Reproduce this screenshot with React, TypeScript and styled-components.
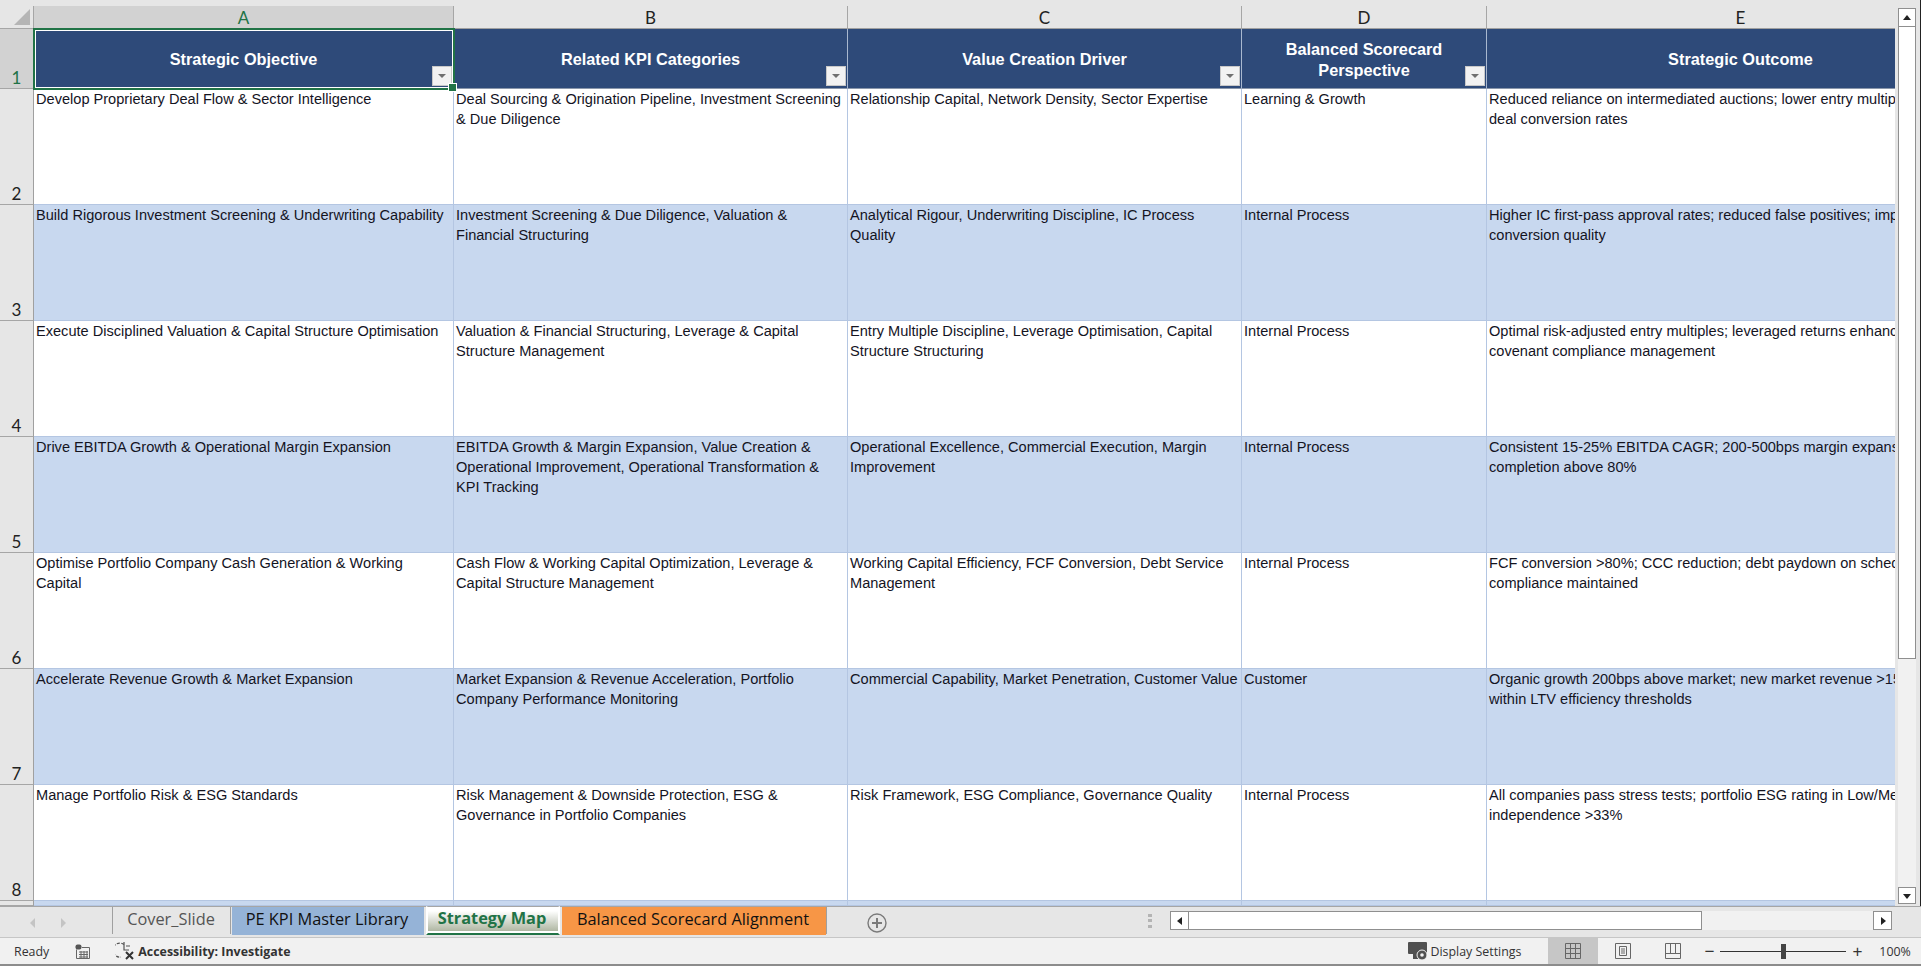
import React from 'react';
import styled, { createGlobalStyle } from 'styled-components';

const GlobalStyle = createGlobalStyle`
  html, body {
    margin: 0;
    padding: 0;
    background: #e6e6e6;
    overflow: hidden;
  }
  * {
    box-sizing: border-box;
  }
`;

const AppFrame = styled.div`
  width: 1921px;
  height: 966px;
  display: flex;
  flex-direction: column;
  overflow: hidden;
  background: #e6e6e6;
  font-family: 'Liberation Sans', Arial, sans-serif;
`;

const WorkArea = styled.div`
  display: flex;
  height: 906px;
`;

const Sheet = styled.div`
  width: 1895px;
  height: 906px;
  padding-top: 6px;
  overflow: hidden;
  display: grid;
  grid-template-columns: 34px 420px 394px 394px 245px 508px;
  grid-template-rows: 23px 60px repeat(7, 116px) 5px;
`;

const Corner = styled.div`
  display: flex;
  justify-content: flex-end;
  align-items: flex-end;
  padding: 0 3px 3px 0;
  border-right: 1px solid #a6a6a6;
  border-bottom: 1px solid #a6a6a6;
  &::after {
    content: '';
    width: 0;
    height: 0;
    border-style: solid;
    border-width: 0 0 16px 16px;
    border-color: transparent transparent #b5b5b5 transparent;
  }
`;

const ColHead = styled.div<{ $selected?: boolean }>`
  display: flex;
  justify-content: center;
  align-items: center;
  font-family: Lato, sans-serif;
  font-size: 17px;
  color: ${(p) => (p.$selected ? '#217346' : '#222')};
  background: ${(p) => (p.$selected ? '#d2d2d2' : '#e6e6e6')};
  border-right: 1px solid #a6a6a6;
  border-bottom: 1px solid #a0a0a0;
`;

const RowHead = styled.div<{ $selected?: boolean }>`
  display: flex;
  justify-content: center;
  align-items: flex-end;
  font-family: Lato, sans-serif;
  font-size: 17px;
  line-height: 20px;
  overflow: hidden;
  color: ${(p) => (p.$selected ? '#217346' : '#222')};
  background: ${(p) => (p.$selected ? '#d2d2d2' : '#e6e6e6')};
  border-right: 1px solid #a0a0a0;
  border-bottom: 1px solid #a6a6a6;
`;

const HeaderCell = styled.div`
  position: relative;
  display: flex;
  justify-content: center;
  align-items: center;
  text-align: center;
  white-space: pre;
  background: #2e4a79;
  color: #fff;
  font-weight: 700;
  font-size: 16.3px;
  line-height: 21px;
  padding-top: 2px;
  border-right: 1px solid #a9b8cf;
  border-bottom: 1px solid #8a97ab;
`;

const FilterButton = styled.div`
  position: absolute;
  right: 1px;
  bottom: 2px;
  width: 20px;
  height: 20px;
  display: flex;
  justify-content: center;
  align-items: center;
  background: #f2f2f2;
  border: 1px solid #c8c8c8;
  &::after {
    content: '';
    border-style: solid;
    border-width: 4px 4px 0 4px;
    border-color: #707070 transparent transparent transparent;
  }
`;

const SelectionBox = styled.div`
  position: absolute;
  inset: -1px -2px -2px -1px;
  border: 2px solid #217346;
  box-shadow: inset 0 0 0 1px #fff;
  pointer-events: none;
  z-index: 2;
  &::after {
    content: '';
    position: absolute;
    right: -4px;
    bottom: -4px;
    width: 7px;
    height: 7px;
    background: #217346;
    border: 1px solid #fff;
  }
`;

const Cell = styled.div<{ $band: boolean }>`
  padding: 0 0 0 2px;
  font-size: 14.58px;
  line-height: 20px;
  white-space: pre;
  overflow: hidden;
  color: #14141f;
  background: ${(p) => (p.$band ? '#c8d8ef' : '#fff')};
  border-right: 1px solid #b4c6e2;
  border-bottom: 1px solid #b4c6e2;
`;

const VScroll = styled.div`
  flex: 1;
  display: flex;
  flex-direction: column;
  padding: 8px 4px 2px 3px;
  border-right: 1px solid #222;
`;

const ScrollButton = styled.div<{ $w?: number; $h?: number }>`
  flex: none;
  width: ${(p) => (p.$w ? `${p.$w}px` : 'auto')};
  height: ${(p) => (p.$h ? `${p.$h}px` : 'auto')};
  display: flex;
  justify-content: center;
  align-items: center;
  background: #fff;
  border: 1px solid #8f8f8f;
`;

const VTrack = styled.div`
  flex: 1;
  display: flex;
  flex-direction: column;
  background: #f1f1f1;
`;

const VThumb = styled.div`
  height: 632px;
  background: #fff;
  border: 1px solid #8f8f8f;
  border-top: none;
`;

const TabBar = styled.div`
  height: 32px;
  display: flex;
  align-items: flex-start;
  padding-left: 112px;
  border-top: 1px solid #a6a6a6;
  border-bottom: 1px solid #c6c6c6;
  position: relative;
`;

const TabNav = styled.div`
  position: absolute;
  left: 30px;
  top: 11px;
  display: flex;
  gap: 26px;
`;

const Arrow = styled.div<{ $dir: 'left' | 'right' }>`
  border-style: solid;
  border-width: 5px 0 5px 0;
  border-color: transparent #c4c4c4;
  border-left-width: ${(p) => (p.$dir === 'right' ? '5px' : '0')};
  border-right-width: ${(p) => (p.$dir === 'left' ? '5px' : '0')};
`;

const Tab = styled.div<{ $bg?: string; $fg?: string; $w: number }>`
  width: ${(p) => p.$w}px;
  height: 28px;
  display: flex;
  justify-content: center;
  align-items: center;
  padding: 0 2px 4px 0;
  font-family: 'Open Sans', sans-serif;
  font-size: 16.35px;
  white-space: nowrap;
  color: ${(p) => p.$fg || '#111'};
  background: ${(p) => p.$bg || 'transparent'};
`;

const Divider = styled.div`
  flex: none;
  width: 1px;
  height: 27px;
  margin: 0 1px 0 0;
  background: #a0a0a0;
`;

const ActiveTab = styled.div`
  width: 134px;
  height: 29px;
  margin: -1px 2px 0 2px;
  padding: 0 2px 4px 0;
  display: flex;
  justify-content: center;
  align-items: center;
  font-family: 'Open Sans', sans-serif;
  font-weight: 700;
  font-size: 16.35px;
  white-space: nowrap;
  color: #217346;
  background: linear-gradient(#ffffff 15%, #a8b09a 100%);
  border-top: 1px solid #a6a6a6;
  border-left: 2px solid #fff;
  border-right: 2px solid #fff;
  border-bottom: 2px solid #217346;
  box-shadow: inset 0 -2px 0 #fff;
`;

const AddSheet = styled.div`
  margin: 6px 0 0 39px;
  width: 20px;
  height: 20px;
  display: flex;
  justify-content: center;
  align-items: center;
  color: #7a7a7a;
`;

const HScrollWrap = styled.div`
  margin-left: auto;
  margin-right: 29px;
  padding-bottom: 3px;
  display: flex;
  align-items: center;
  height: 100%;
`;

const Dots = styled.div`
  width: 4px;
  height: 14px;
  margin-right: 18px;
  background: repeating-linear-gradient(#b4b4b4 0 3px, transparent 3px 5.5px);
`;

const HTrack = styled.div`
  width: 684px;
  height: 19px;
  display: flex;
  background: #f1f1f1;
`;

const HThumb = styled.div`
  width: 513px;
  background: #fff;
  border: 1px solid #8f8f8f;
  border-left: none;
`;

const StatusBar = styled.div`
  height: 28px;
  display: flex;
  align-items: center;
  background: #f1f1f1;
  border-bottom: 2px solid #8c8c8c;
  font-family: 'Open Sans', sans-serif;
  font-size: 12.4px;
  color: #333;
`;

const StatusText = styled.span<{ $bold?: boolean; $ml: number }>`
  margin-left: ${(p) => p.$ml}px;
  font-weight: ${(p) => (p.$bold ? 700 : 400)};
  white-space: nowrap;
`;

const StatusIcon = styled.svg<{ $ml: number }>`
  flex: none;
  margin-left: ${(p) => p.$ml}px;
  display: block;
`;

const ViewButton = styled.div<{ $active?: boolean; $ml?: number }>`
  flex: none;
  width: 50px;
  height: 26px;
  margin-left: ${(p) => p.$ml ?? 0}px;
  display: flex;
  justify-content: center;
  align-items: center;
  background: ${(p) => (p.$active ? '#c6c6c6' : 'transparent')};
`;

const ZoomSlider = styled.div`
  flex: none;
  width: 126px;
  height: 1px;
  margin-left: 6px;
  background: #333;
  position: relative;
`;

const ZoomKnob = styled.div`
  position: absolute;
  left: 61px;
  top: -7px;
  width: 5px;
  height: 15px;
  background: #444;
`;

const ZoomSign = styled.span<{ $ml: number }>`
  margin-left: ${(p) => p.$ml}px;
  font-size: 17px;
  line-height: 1;
  color: #333;
  font-family: 'Liberation Sans', sans-serif;
`;

const columns = ['A', 'B', 'C', 'D', 'E'];

const headers = [
  'Strategic Objective',
  'Related KPI Categories',
  'Value Creation Driver',
  'Balanced Scorecard\nPerspective',
  'Strategic Outcome',
];

const rows = [
  [
    'Develop Proprietary Deal Flow & Sector Intelligence',
    'Deal Sourcing & Origination Pipeline, Investment Screening\n& Due Diligence',
    'Relationship Capital, Network Density, Sector Expertise',
    'Learning & Growth',
    'Reduced reliance on intermediated auctions; lower entry multiples; improved proprietary\ndeal conversion rates',
  ],
  [
    'Build Rigorous Investment Screening & Underwriting Capability',
    'Investment Screening & Due Diligence, Valuation &\nFinancial Structuring',
    'Analytical Rigour, Underwriting Discipline, IC Process\nQuality',
    'Internal Process',
    'Higher IC first-pass approval rates; reduced false positives; improved post-close\nconversion quality',
  ],
  [
    'Execute Disciplined Valuation & Capital Structure Optimisation',
    'Valuation & Financial Structuring, Leverage & Capital\nStructure Management',
    'Entry Multiple Discipline, Leverage Optimisation, Capital\nStructure Structuring',
    'Internal Process',
    'Optimal risk-adjusted entry multiples; leveraged returns enhanced within\ncovenant compliance management',
  ],
  [
    'Drive EBITDA Growth & Operational Margin Expansion',
    'EBITDA Growth & Margin Expansion, Value Creation &\nOperational Improvement, Operational Transformation &\nKPI Tracking',
    'Operational Excellence, Commercial Execution, Margin\nImprovement',
    'Internal Process',
    'Consistent 15-25% EBITDA CAGR; 200-500bps margin expansion; initiative\ncompletion above 80%',
  ],
  [
    'Optimise Portfolio Company Cash Generation & Working\nCapital',
    'Cash Flow & Working Capital Optimization, Leverage &\nCapital Structure Management',
    'Working Capital Efficiency, FCF Conversion, Debt Service\nManagement',
    'Internal Process',
    'FCF conversion >80%; CCC reduction; debt paydown on schedule; covenant\ncompliance maintained',
  ],
  [
    'Accelerate Revenue Growth & Market Expansion',
    'Market Expansion & Revenue Acceleration, Portfolio\nCompany Performance Monitoring',
    'Commercial Capability, Market Penetration, Customer Value',
    'Customer',
    'Organic growth 200bps above market; new market revenue >15%; CAC\nwithin LTV efficiency thresholds',
  ],
  [
    'Manage Portfolio Risk & ESG Standards',
    'Risk Management & Downside Protection, ESG &\nGovernance in Portfolio Companies',
    'Risk Framework, ESG Compliance, Governance Quality',
    'Internal Process',
    'All companies pass stress tests; portfolio ESG rating in Low/Medium; board\nindependence >33%',
  ],
];

const ArrowGlyph = ({ d }: { d: string }) => (
  <svg width="10" height="10" viewBox="0 0 10 10">
    <path d={d} fill="#222" />
  </svg>
);

const App = () => {
  return (
    <AppFrame>
      <GlobalStyle />
      <WorkArea>
        <Sheet>
          <Corner />
          {columns.map((c, i) => (
            <ColHead key={c} $selected={i === 0}>{c}</ColHead>
          ))}

          <RowHead $selected>1</RowHead>
          {headers.map((h, i) => (
            <HeaderCell key={h}>
              {h}
              {i === 0 && <SelectionBox />}
              {i < 4 && <FilterButton />}
            </HeaderCell>
          ))}

          {rows.map((row, r) => (
            <React.Fragment key={r}>
              <RowHead>{r + 2}</RowHead>
              {row.map((text, c) => (
                <Cell key={c} $band={r % 2 === 1}>{text}</Cell>
              ))}
            </React.Fragment>
          ))}

          <RowHead />
          {columns.map((c) => (
            <Cell key={c} $band />
          ))}
        </Sheet>

        <VScroll>
          <ScrollButton $h={19}>
            <ArrowGlyph d="M5 2 L9 7 L1 7 Z" />
          </ScrollButton>
          <VTrack>
            <VThumb />
          </VTrack>
          <ScrollButton $h={17}>
            <ArrowGlyph d="M1 3 L9 3 L5 8 Z" />
          </ScrollButton>
        </VScroll>
      </WorkArea>

      <TabBar>
        <TabNav>
          <Arrow $dir="left" />
          <Arrow $dir="right" />
        </TabNav>
        <Divider />
        <Tab $w={116} $fg="#555">Cover_Slide</Tab>
        <Divider />
        <Tab $w={192} $bg="#95b3d7">PE KPI Master Library</Tab>
        <ActiveTab>Strategy Map</ActiveTab>
        <Tab $w={264} $bg="#f79646">Balanced Scorecard Alignment</Tab>
        <Divider />
        <AddSheet>
          <svg width="20" height="20" viewBox="0 0 20 20" fill="none" stroke="currentColor">
            <circle cx="10" cy="10" r="9" strokeWidth="1.4" />
            <path d="M10 5 V15 M5 10 H15" strokeWidth="2" />
          </svg>
        </AddSheet>
        <HScrollWrap>
          <Dots />
          <ScrollButton $w={19} $h={19}>
            <ArrowGlyph d="M7 1 L7 9 L2 5 Z" />
          </ScrollButton>
          <HTrack>
            <HThumb />
          </HTrack>
          <ScrollButton $w={19} $h={19}>
            <ArrowGlyph d="M3 1 L3 9 L8 5 Z" />
          </ScrollButton>
        </HScrollWrap>
      </TabBar>

      <StatusBar>
        <StatusText $ml={14}>Ready</StatusText>
        <StatusIcon $ml={26} width="15" height="15" viewBox="0 0 15 15" fill="none">
          <rect x="0.5" y="0.5" width="6" height="5" rx="2" fill="#555" />
          <path d="M1.5 5.5 V14.5 H14.5 V3.5 H7 M4 8 H13 M4 10.5 H13 M4 13 H13 M6 7 V14 M9 7 V14 M12 7 V14" stroke="#666" />
        </StatusIcon>
        <StatusIcon $ml={25} width="20" height="20" viewBox="0 0 20 20" fill="none" stroke="#555">
          <path d="M9 3.5 A7 7 0 1 0 6 16" strokeWidth="1.2" strokeDasharray="3 1.5" />
          <path d="M9 1 V9 H14 M11 5 H15" strokeWidth="1.2" />
          <path d="M11 11 L18 18 M18 11 L11 18" stroke="#333" strokeWidth="2" />
        </StatusIcon>
        <StatusText $bold $ml={3}>Accessibility: Investigate</StatusText>
        <StatusIcon $ml={1118} width="20" height="20" viewBox="0 0 20 20">
          <rect x="0" y="1" width="19" height="12" rx="1" fill="#505050" />
          <rect x="5" y="13" width="5" height="5" fill="#505050" />
          <circle cx="14" cy="14" r="5" fill="#505050" stroke="#f1f1f1" />
          <circle cx="14" cy="14" r="1.8" fill="#f1f1f1" />
        </StatusIcon>
        <StatusText $ml={2}>Display Settings</StatusText>
        <ViewButton $active $ml={27}>
          <svg width="16" height="16" viewBox="0 0 16 16" fill="none" stroke="#666">
            <path d="M.5 .5 H15.5 V15.5 H.5 Z M5.5 .5 V15.5 M10.5 .5 V15.5 M.5 5.5 H15.5 M.5 10.5 H15.5" />
          </svg>
        </ViewButton>
        <ViewButton>
          <svg width="16" height="16" viewBox="0 0 16 16" fill="none" stroke="#666">
            <path d="M.5 .5 H15.5 V15.5 H.5 Z M4.5 3.5 H11.5 V12.5 H4.5 Z M6 6 H10 M6 8 H10 M6 10 H10" />
          </svg>
        </ViewButton>
        <ViewButton>
          <svg width="16" height="16" viewBox="0 0 16 16" fill="none" stroke="#666">
            <path d="M.5 .5 H15.5 V15.5 H.5 Z M.5 10.5 H15.5 M5.5 .5 V10.5 M10.5 .5 V10.5" />
          </svg>
        </ViewButton>
        <ZoomSign $ml={6}>−</ZoomSign>
        <ZoomSlider>
          <ZoomKnob />
        </ZoomSlider>
        <ZoomSign $ml={6}>+</ZoomSign>
        <StatusText $ml={17}>100%</StatusText>
      </StatusBar>
    </AppFrame>
  );
};

export default App;
